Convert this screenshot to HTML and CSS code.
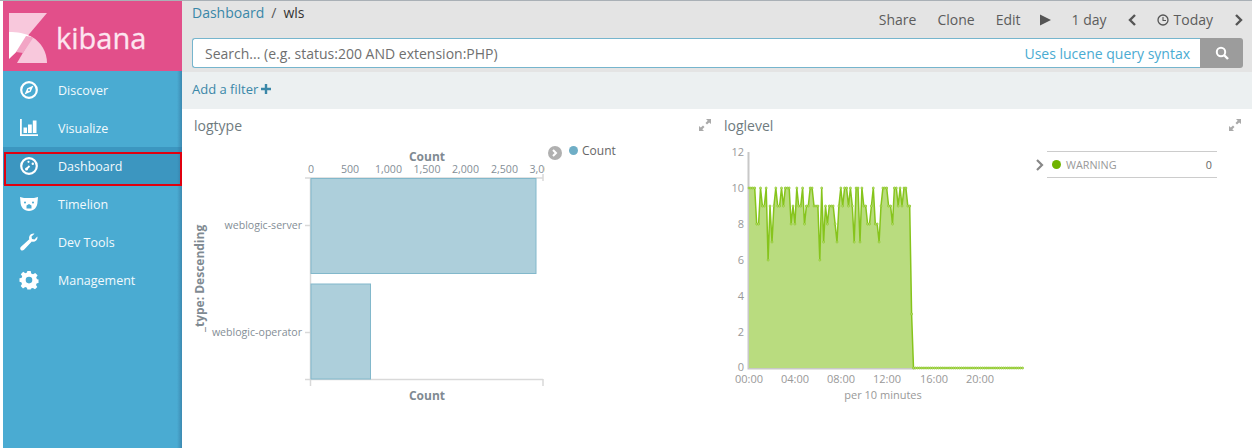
FILE: index.html
```html
<!DOCTYPE html>
<html lang="en">
<head>
    <meta charset="UTF-8">
    <title>wls - Kibana</title>
    <link rel="stylesheet" href="styles.css">
</head>
<body>
<aside class="sidebar">
    <div class="brand">
        <svg class="brand-logo" viewBox="8 11 40 52" width="40" height="52">
            <path fill="#f8c8dc" d="M9 12H47L9 57Z"/>
            <path fill="#fff" d="M9 31C17 31 25 32 32 36L9 58Z"/>
            <path fill="#f8c8dc" d="M17 62L32 36C41 41 47 51 47 62Z"/>
            <path fill="#f2a5c5" d="M16 51L26 35Q30 35 33 37L23 52Z"/>
        </svg>
        <span class="brand-name">kibana</span>
    </div>
    <nav>
        <ul class="nav-list">
            <li class="nav-item">
                <svg class="nav-icon" viewBox="0 0 20 20"><circle cx="10" cy="10" r="7.8" fill="none" stroke="#fff" stroke-width="2.2"/><path fill="#fff" d="M14.500 5.500L11.700 11.700L5.500 14.500L8.300 8.300ZM10 9A1 1 0 1 0 10 11A1 1 0 1 0 10 9Z"/></svg>
                <a href="#discover">Discover</a>
            </li>
            <li class="nav-item">
                <svg class="nav-icon" viewBox="0 0 20 20"><path fill="#fff" d="M1 1H2.800V16.200H19V18H1ZM4.500 9.500H8V15H4.500ZM9 6.500H12.800V15H9ZM13.800 2.500H17.500V15H13.800Z"/></svg>
                <a href="#visualize">Visualize</a>
            </li>
            <li class="nav-item active">
                <svg class="nav-icon" viewBox="0 0 20 20"><circle cx="10" cy="10" r="7.8" fill="none" stroke="#fff" stroke-width="2.2"/><circle cx="9.500" cy="5.800" r="1.100" fill="#fff"/><circle cx="13.800" cy="7.800" r="1.200" fill="#fff"/><path fill="none" stroke="#fff" stroke-width="1.800" d="M7.500 13L10.500 10"/><circle cx="7.500" cy="13" r="1.500" fill="#fff"/></svg>
                <a href="#dashboard">Dashboard</a>
            </li>
            <li class="nav-item">
                <svg class="nav-icon" viewBox="0 0 20 20"><path fill="#fff" fill-rule="evenodd" d="M1 3L5 4H15L19 3L18.500 8C18.500 13 15 17 10 17C5 17 1.500 13 1.500 8ZM6 7.500A1 1 0 1 0 6 9.500A1 1 0 1 0 6 7.500ZM14 7.500A1 1 0 1 0 14 9.500A1 1 0 1 0 14 7.500ZM7.500 11.500L10 10L12.500 11.500L12.500 14.500H7.500Z"/></svg>
                <a href="#timelion">Timelion</a>
            </li>
            <li class="nav-item">
                <svg class="nav-icon" viewBox="0 0 20 20"><path fill="#fff" d="M18.500 5.500C18.500 8.500 15.500 10.500 12.800 9.500L5 17.800C4 18.800 2.700 18.800 1.800 17.900C0.900 17 1 15.700 2 14.800L10.300 7.200C9.400 4.500 11.500 1.500 14.500 1.500L15.500 1.700L12.500 4.500L13 7L15.500 7.500L18.300 4.500Z"/></svg>
                <a href="#devtools">Dev Tools</a>
            </li>
            <li class="nav-item">
                <svg class="nav-icon" viewBox="0 0 20 20"><path fill="#fff" fill-rule="evenodd" d="M8.300 1H11.700L12.200 3.500L14 4.300L16.200 2.900L18.600 5.300L17.200 7.500L18 9.300L19.500 9.600V13L17.800 13.200L17 15L18.300 17L16 19.300L13.900 17.900L12 18.600L11.700 19.500H8.300L8 17.800L6.200 17L4 18.400L1.700 16L3 14L2.300 12.200L0.500 11.700V8.300L2.500 8L3.200 6.200L1.800 4.200L4.200 1.800L6.300 3.200L8 2.500ZM10 6.800A3.300 3.300 0 1 0 10 13.400A3.300 3.300 0 1 0 10 6.800Z"/></svg>
                <a href="#management">Management</a>
            </li>
        </ul>
    </nav>
    <div class="red-mark"></div>
</aside>

<div class="content">
    <header class="topbar">
        <div class="topbar-row">
            <div class="crumbs"><a href="#dashboard">Dashboard</a><span class="crumb-sep">/</span><span class="crumb-name">wls</span></div>
            <div class="top-menu">
                <span>Share</span>
                <span>Clone</span>
                <span>Edit</span>
                <svg class="top-icon play" viewBox="0 0 12 12" width="11" height="12"><path fill="#555" d="M0 0L12 6L0 12Z"/></svg>
                <span>1 day</span>
                <svg class="top-icon" viewBox="0 0 8 12" width="8" height="12"><path fill="none" stroke="#555" stroke-width="2.400" d="M7 1L2 6L7 11"/></svg>
                <span class="today"><svg viewBox="0 0 12 12" width="12" height="12"><circle cx="6" cy="6" r="5" fill="none" stroke="#555" stroke-width="1.300"/><path fill="none" stroke="#555" stroke-width="1.100" d="M6 3V6.500H9"/></svg>Today</span>
                <svg class="top-icon" viewBox="0 0 8 12" width="8" height="12"><path fill="none" stroke="#555" stroke-width="2.400" d="M1 1L6 6L1 11"/></svg>
            </div>
        </div>
        <form class="search">
            <div class="search-box">
                <span class="search-hint">Search... (e.g. status:200 AND extension:PHP)</span>
                <a class="search-syntax" href="#syntax">Uses lucene query syntax</a>
            </div>
            <div class="search-btn">
                <svg viewBox="0 0 14 14" width="14" height="14"><circle cx="6" cy="6" r="4.200" fill="none" stroke="#fff" stroke-width="2"/><path stroke="#fff" stroke-width="2.400" d="M9 9L13 13"/></svg>
            </div>
        </form>
    </header>
    <div class="filterbar">
        <a href="#filter">Add a filter</a>
        <svg viewBox="0 0 10 10" width="10" height="10"><path fill="#3a87a8" d="M3.800 0H6.200V3.800H10V6.200H6.200V10H3.800V6.200H0V3.800H3.800Z"/></svg>
    </div>

    <main class="panels">
        <section class="panel">
            <div class="panel-head">
                <h2>logtype</h2>
                <svg class="expand" viewBox="0 0 12 12" width="12" height="12"><path fill="#aaa" d="M7 0H12V5L10.200 3.400L8 5.500L6.500 4L8.700 1.700ZM5 12H0V7L1.800 8.600L4 6.500L5.500 8L3.300 10.300Z"/></svg>
            </div>
            <div class="panel-body">
                <svg class="chart chart-bars" viewBox="182 138 363 272" width="363" height="272">
                    <g class="axis-line">
                        <path d="M305 178H543M305 379.500H543M310.500 178V386M543 174V181M543 379V386M305 225.500H310M305 332.500H310"/>
                    </g>
                    <rect class="bar" x="311" y="178.500" width="225" height="95"/>
                    <rect class="bar" x="311" y="284" width="59.500" height="95"/>
                    <g class="tick-labels mid">
                        <text x="311" y="173">0</text>
                        <text x="350" y="173">500</text>
                        <text x="388.500" y="173">1,000</text>
                        <text x="427" y="173">1,500</text>
                        <text x="465.500" y="173">2,000</text>
                        <text x="504.500" y="173">2,500</text>
                        <text x="543" y="173">3,000</text>
                    </g>
                    <g class="tick-labels end">
                        <text x="302" y="229">weblogic-server</text>
                        <text x="302" y="336">weblogic-operator</text>
                    </g>
                    <g class="axis-title">
                        <text x="427" y="161">Count</text>
                        <text x="427" y="400">Count</text>
                        <text x="0" y="0" transform="translate(204 332) rotate(-90)">_type: Descending</text>
                    </g>
                </svg>
                <div class="legend-side">
                    <span class="legend-toggle"><svg viewBox="0 0 6 8" width="6" height="8"><path fill="none" stroke="#fff" stroke-width="2" d="M1 1L4 4L1 7"/></svg></span>
                    <span class="dot dot-blue"></span>
                    <span class="legend-name">Count</span>
                </div>
            </div>
        </section>

        <section class="panel">
            <div class="panel-head">
                <h2>loglevel</h2>
                <svg class="expand" viewBox="0 0 12 12" width="12" height="12"><path fill="#aaa" d="M7 0H12V5L10.200 3.400L8 5.500L6.500 4L8.700 1.700ZM5 12H0V7L1.800 8.600L4 6.500L5.500 8L3.300 10.300Z"/></svg>
            </div>
            <div class="panel-body">
                <svg class="chart chart-area" id="areaChart" viewBox="716 138 314 272" width="314" height="272">
                    <path class="axis-line-area" d="M748.500 152V368.500H915"/>
                    <g class="area-labels end">
                        <text x="744" y="156">12</text>
                        <text x="744" y="192">10</text>
                        <text x="744" y="228">8</text>
                        <text x="744" y="264">6</text>
                        <text x="744" y="300">4</text>
                        <text x="744" y="336">2</text>
                        <text x="744" y="371">0</text>
                    </g>
                    <g class="area-labels mid">
                        <text x="749" y="383">00:00</text>
                        <text x="795" y="383">04:00</text>
                        <text x="841" y="383">08:00</text>
                        <text x="887" y="383">12:00</text>
                        <text x="934" y="383">16:00</text>
                        <text x="980" y="383">20:00</text>
                        <text x="883" y="399">per 10 minutes</text>
                    </g>
                </svg>
                <div class="legend-list">
                    <svg class="legend-caret" viewBox="0 0 8 12" width="8" height="12"><path fill="none" stroke="#888" stroke-width="2.200" d="M1 1L6 6L1 11"/></svg>
                    <div class="legend-row">
                        <span class="dot dot-green"></span>
                        <span class="legend-label">WARNING</span>
                        <span class="legend-value">0</span>
                    </div>
                </div>
            </div>
        </section>
    </main>
</div>
<script src="chart.js"></script>
</body>
</html>
```
FILE: styles.css
```css
* {
    box-sizing: border-box;
}
html, body {
    height: 448px;
    overflow: hidden;
}
body {
    margin: 0;
    display: flex;
    font-family: 'Open Sans', sans-serif;
    background-color: #fff;
    border-top: 1px solid #a9b0b6;
}
a {
    text-decoration: none;
    color: inherit;
}
.sidebar {
    position: relative;
    width: 179px;
    margin-left: 3px;
    background-color: #4aabd2;
    flex-shrink: 0;
}
.sidebar::after {
    content: "";
    position: absolute;
    top: 70px;
    right: 0;
    bottom: 0;
    width: 5px;
    background: linear-gradient(to right, rgba(50, 110, 150, 0), rgba(50, 110, 150, 0.55));
}
.brand {
    display: flex;
    align-items: center;
    gap: 8px;
    height: 70px;
    padding-left: 5px;
    background-color: #e24f8a;
}
.brand-logo {
    flex-shrink: 0;
    margin-top: 3px;
}
.brand-name {
    font-size: 29px;
    color: #fde6f0;
    line-height: 1;
    margin-top: 2px;
    -webkit-text-stroke: 0.3px #fde6f0;
}
.nav-list {
    list-style-type: none;
    margin: 0;
    padding: 0;
}
.nav-item {
    display: flex;
    align-items: center;
    height: 38px;
    padding-left: 16px;
    font-size: 12.500px;
}
.nav-item a {
    margin-left: 19px;
    color: #f2fafd;
}
.nav-item.active {
    background-color: #3c96c0;
}
.nav-icon {
    width: 20px;
    height: 20px;
    flex-shrink: 0;
}
.red-mark {
    position: absolute;
    left: 1px;
    top: 151px;
    width: 178px;
    height: 34px;
    border: 2px solid #e0000f;
    z-index: 2;
}
.content {
    flex: 1;
    min-width: 0;
}
.topbar {
    height: 71px;
    background-color: #e4e4e4;
    padding: 0 9px 0 10px;
}
.topbar-row {
    display: flex;
    justify-content: space-between;
    height: 37px;
}
.crumbs {
    font-size: 14px;
    line-height: 24px;
    color: #3a87a8;
}
.crumb-sep {
    color: #555;
    margin: 0 7px;
}
.crumb-name {
    color: #333;
}
.top-menu {
    display: flex;
    align-items: center;
    height: 37px;
    gap: 21px;
    font-size: 14px;
    color: #5c5c5c;
}
.top-icon {
    flex-shrink: 0;
}
.play {
    margin-left: -2px;
}
.today {
    display: inline-flex;
    align-items: center;
    gap: 5px;
    margin-right: 1px;
}
.search {
    display: flex;
    height: 30px;
}
.search-box {
    flex: 1;
    display: flex;
    justify-content: space-between;
    align-items: center;
    background-color: #fff;
    border: 1px solid #76b5cd;
    border-right: none;
    border-radius: 3px 0 0 3px;
    padding: 0 10px 0 12px;
    font-size: 14px;
}
.search-hint {
    color: #6f6f6f;
}
.search-syntax {
    color: #4aabd2;
}
.search-btn {
    display: flex;
    align-items: center;
    justify-content: center;
    width: 43px;
    background-color: #9c9c9c;
    border-radius: 0 3px 3px 0;
}
.filterbar {
    display: flex;
    align-items: center;
    gap: 3px;
    height: 37px;
    padding: 0 0 4px 10px;
    background-color: #ecf0f1;
    font-size: 13px;
    color: #3a87a8;
}
.panels {
    display: grid;
    grid-template-columns: 534px 536px;
}
.panel-head {
    display: flex;
    justify-content: space-between;
    align-items: center;
    height: 29px;
    padding: 3px 5px 0 12px;
}
.panel:nth-child(2) .panel-head {
    padding: 3px 11px 0 8px;
}
.panel-head h2 {
    margin: 0;
    font-size: 14px;
    font-weight: 400;
    color: #6f7b80;
}
.panel-body {
    display: flex;
    align-items: flex-start;
}
.chart {
    display: flex;
    flex-shrink: 0;
    overflow: hidden;
}
.axis-line path, .axis-line-area {
    fill: none;
    stroke: #d9d9d9;
    stroke-width: 1.500;
}
.axis-line-area {
    stroke: #c8c8c8;
    stroke-width: 2;
}
.bar {
    fill: #adcfdb;
    stroke: #82b8cb;
    stroke-width: 1;
}
.tick-labels text {
    font-size: 10.600px;
    fill: #848e96;
}
.mid text {
    text-anchor: middle;
}
.end text {
    text-anchor: end;
}
.axis-title text {
    font-size: 12px;
    font-weight: 700;
    fill: #7f8a92;
    text-anchor: middle;
}
.axis-title text:last-child {
    text-anchor: start;
}
.area-labels text {
    font-size: 11px;
    fill: #999;
}
.area-fill {
    fill: #b9dc7f;
}
.area-line {
    fill: none;
    stroke: #86c41c;
    stroke-width: 1.500;
}
.area-dot {
    fill: #c7e58f;
    stroke: #86c41c;
    stroke-width: 0.700;
}
.legend-side {
    display: flex;
    align-items: center;
    height: 16px;
    margin-top: 4px;
    font-size: 12px;
    color: #666;
}
.legend-toggle {
    display: flex;
    align-items: center;
    justify-content: center;
    width: 14px;
    height: 14px;
    margin: 6px 0 0 3px;
    border-radius: 50%;
    background-color: #b0b0b0;
}
.dot {
    display: inline-block;
    width: 9px;
    height: 9px;
    border-radius: 50%;
    flex-shrink: 0;
}
.dot-blue {
    background-color: #6faec6;
    margin: 0 4px 0 7px;
}
.dot-green {
    background-color: #6fb300;
    margin-right: 5px;
}
.legend-list {
    display: flex;
    align-items: center;
    margin: 13px 0 0 6px;
}
.legend-caret {
    margin-right: 3px;
}
.legend-row {
    display: flex;
    align-items: center;
    width: 170px;
    height: 27px;
    padding: 0 5px;
    border-top: 1px solid #ccc;
    border-bottom: 1px solid #ccc;
    font-size: 10.800px;
    color: #999;
}
.legend-value {
    margin-left: auto;
    color: #666;
}
```
FILE: chart.js
```js
// docs per 10 minute bucket, read off the loglevel panel
const values = [
    10, 10, 10, 10, 8, 8, 10, 9, 9, 10, 6, 9, 7, 9, 10, 9, 9, 10, 9, 10, 10, 10,
    8, 9, 8, 10, 9, 9, 10, 8, 9, 9, 10, 10, 9, 9, 9, 6, 10, 7, 9, 8, 9, 9, 9, 8,
    7, 9, 10, 9, 10, 10, 9, 10, 9, 7, 10, 10, 7, 10, 9, 9, 8, 8, 9, 10, 8, 8, 7,
    9, 10, 10, 10, 9, 9, 8, 10, 10, 9, 10, 9, 10, 10, 9, 9, 3
];
while (values.length < 144) {
    values.push(0);
}

const svg = document.getElementById('areaChart');
const ns = 'http://www.w3.org/2000/svg';
const xOf = i => 749 + i * 1.913;
const yOf = v => 368 - v * 18;

function add(tag, attrs) {
    const el = document.createElementNS(ns, tag);
    for (const key in attrs) {
        el.setAttribute(key, attrs[key]);
    }
    svg.insertBefore(el, svg.querySelector('.area-labels'));
    return el;
}

const points = values.map((v, i) => xOf(i).toFixed(1) + ',' + yOf(v));
add('polygon', {
    class: 'area-fill',
    points: '749,368 ' + points.join(' ') + ' ' + xOf(143).toFixed(1) + ',368'
});
add('polyline', { class: 'area-line', points: points.join(' ') });
values.forEach((v, i) => {
    add('circle', { class: 'area-dot', cx: xOf(i).toFixed(1), cy: yOf(v), r: 1 });
});
```
